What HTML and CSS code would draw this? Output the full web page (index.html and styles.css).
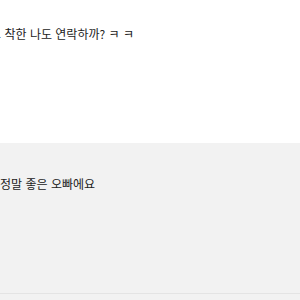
FILE: index.html
```html
<!DOCTYPE html>
<html lang="ko">
<head>
    <meta charset="UTF-8">
    <title>댓글</title>
    <link rel="stylesheet" href="styles.css">
</head>
<body>
    <div class="comment">
        <p class="comment-text first">좋고 착한 나도 연락하까? ㅋ ㅋ</p>
    </div>
    <div class="comment reply">
        <p class="comment-text">정말 좋은 오빠에요</p>
        <div class="comment-foot"></div>
    </div>
</body>
</html>
```
FILE: styles.css
```css
body {
    margin: 0;
    background: #fff;
    font-family: "Noto Sans CJK KR", "Noto Sans", sans-serif;
    color: #222;
    overflow: hidden;
}

.comment {
    height: 143px;
    padding-top: 25px;
    box-sizing: border-box;
}

.comment-text {
    margin: 0;
    font-size: 12px;
    line-height: 18px;
    white-space: nowrap;
}

.first {
    margin-left: -21px;
}

.reply {
    background: #f2f2f2;
    height: 157px;
    padding-top: 32px;
}

.comment-foot {
    margin-top: 100px;
    border-bottom: 1px solid #e4e4e4;
}
```
